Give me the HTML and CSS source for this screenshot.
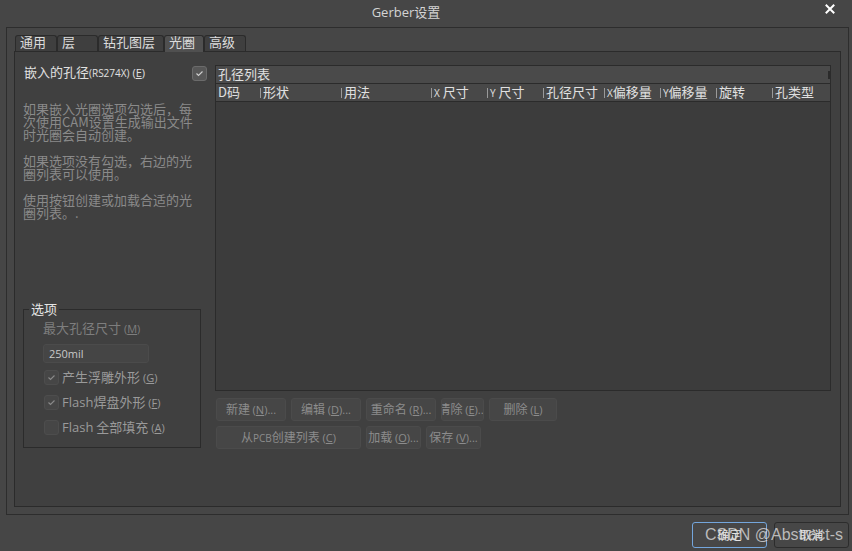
FILE: index.html
```html
<!DOCTYPE html>
<html lang="zh-CN">
<head>
<meta charset="utf-8">
<title>Gerber设置</title>
<link rel="stylesheet" href="styles.css">
</head>
<body>
<div class="window">
  <header class="titlebar">
    <div class="title">Gerber设置</div>
    <div class="close"><svg width="10" height="10" viewBox="0 0 10 10"><path d="M1.5 1.5L8.5 8.5M8.5 1.5L1.5 8.5" stroke="#ffffff" stroke-width="2" stroke-linecap="square"/></svg></div>
  </header>
  <div class="frame">
    <div class="tabs">
      <div class="tab t1">通用</div>
      <div class="tab t2">层</div>
      <div class="tab t3">钻孔图层</div>
      <div class="tab t4 active">光圈</div>
      <div class="tab t5">高级</div>
    </div>
    <div class="page">
      <div class="left">
        <div class="embed-row">
          <span class="embed-label">嵌入的孔径<span class="s10">(RS274X)</span> <span class="s11">(<u>E</u>)</span></span>
          <span class="cb-big"><svg width="13" height="13" viewBox="0 0 13 13"><path d="M3.5 6.5L5.5 8.5L9.5 4.5" fill="none" stroke="#d0d0d0" stroke-width="1.1"/></svg></span>
        </div>
        <div class="desc">
          <p>如果嵌入光圈选项勾选后，每<br>次使用CAM设置生成输出文件<br>时光圈会自动创建。</p>
          <p>如果选项没有勾选，右边的光<br>圈列表可以使用。</p>
          <p>使用按钮创建或加载合适的光<br>圈列表。.</p>
        </div>
        <fieldset class="group">
          <legend>选项</legend>
          <div class="field-label">最大孔径尺寸 <span class="s11">(<u>M</u>)</span></div>
          <div class="input">250mil</div>
          <div class="check-row"><span class="cb"><svg width="13" height="13" viewBox="0 0 13 13"><path d="M3.5 6.5L5.5 8.5L9.5 4.5" fill="none" stroke="#8a8a8a" stroke-width="1.1"/></svg></span><span class="check-label">产生浮雕外形 <span class="s11">(<u>G</u>)</span></span></div>
          <div class="check-row"><span class="cb"><svg width="13" height="13" viewBox="0 0 13 13"><path d="M3.5 6.5L5.5 8.5L9.5 4.5" fill="none" stroke="#8a8a8a" stroke-width="1.1"/></svg></span><span class="check-label"><span class="lat">Flash</span>焊盘外形 <span class="s11">(<u>F</u>)</span></span></div>
          <div class="check-row"><span class="cb"></span><span class="check-label"><span class="lat">Flash</span> 全部填充 <span class="s11">(<u>A</u>)</span></span></div>
        </fieldset>
      </div>
      <div class="right">
        <div class="list">
          <div class="list-title">孔径列表</div>
          <div class="cols">
            <div class="col first">D码</div>
            <div class="col">形状</div>
            <div class="col">用法</div>
            <div class="col"><span class="xy">X</span> 尺寸</div>
            <div class="col"><span class="xy">Y</span> 尺寸</div>
            <div class="col">孔径尺寸</div>
            <div class="col"><span class="xy">X</span>偏移量</div>
            <div class="col"><span class="xy">Y</span>偏移量</div>
            <div class="col">旋转</div>
            <div class="col">孔类型</div>
          </div>
          <div class="list-body"></div>
        </div>
        <div class="btns">
          <div class="btn-row">
            <div class="btn w70"><span>新建 <span class="s11">(<u>N</u>)...</span></span></div>
            <div class="btn w70"><span>编辑 <span class="s11">(<u>D</u>)...</span></span></div>
            <div class="btn w70"><span>重命名 <span class="s11">(<u>R</u>)...</span></span></div>
            <div class="btn w43"><span>清除 <span class="s11">(<u>E</u>)...</span></span></div>
            <div class="btn w68"><span>删除 <span class="s11">(<u>L</u>)</span></span></div>
          </div>
          <div class="btn-row">
            <div class="btn w145"><span>从<span class="s10">PCB</span>创建列表 <span class="s11">(<u>C</u>)</span></span></div>
            <div class="btn w55"><span>加载 <span class="s11">(<u>O</u>)...</span></span></div>
            <div class="btn w55"><span>保存 <span class="s11">(<u>V</u>)...</span></span></div>
          </div>
        </div>
      </div>
    </div>
  </div>
  <div class="footer">
    <div class="fbtn ok">确定</div>
    <div class="fbtn">取消</div>
  </div>
  <div class="watermark">CSDN @Abstract-s</div>
</div>
</body>
</html>
```
FILE: styles.css
```css
* { box-sizing: border-box; }
html, body { margin: 0; padding: 0; }
body {
  width: 852px;
  height: 551px;
  overflow: hidden;
  background: #464646;
  font-family: "Noto Sans CJK SC", "Open Sans", sans-serif;
  font-size: 13px;
  color: #dedede;
}
.window { position: relative; width: 852px; height: 551px; }
.lat, .s10, .s11, .xy, .input { font-family: "Open Sans", "Noto Sans CJK SC", sans-serif; }
.s10 { font-size: 10px; }
.s11 { font-size: 11px; }
u { text-underline-offset: 1px; }

.titlebar { height: 27px; display: flex; align-items: flex-start; }
.title { flex: 1; margin-top: 4px; text-align: center; color: #d4d4d4; font-size: 13px; line-height: 16px; font-family: "Open Sans", "Noto Sans CJK SC", sans-serif; }
.close { width: 40px; padding-right: 4px; margin-top: 4px; display: flex; justify-content: center; }
.close svg { display: block; }

.frame {
  margin-left: 6px;
  width: 843px;
  height: 488px;
  border: 1px solid #2d2d2d;
  padding: 7px;
}
.tabs { display: flex; height: 16px; padding-left: 1px; }
.tab {
  height: 16px;
  border: 1px solid #2b2b2b;
  border-bottom: none;
  border-radius: 3px 3px 0 0;
  background: #3f3f3f;
  color: #dcdcdc;
  font-size: 13px;
  line-height: 12px;
  padding-left: 4px;
  white-space: nowrap;
}
.tab.active { background: #505050; height: 17px; position: relative; z-index: 1; }
.t1 { width: 42px; } .t2 { width: 41px; } .t3 { width: 66px; } .t4 { width: 40px; } .t5 { width: 42px; }

.page {
  height: 456px;
  border: 1px solid #2b2b2b;
  background: #404040;
  padding: 13px 9px 0 8px;
  display: grid;
  grid-template-columns: 184px 616px;
  column-gap: 8px;
  align-items: start;
}

.embed-row { display: flex; justify-content: space-between; align-items: center; height: 16px; }
.embed-label { padding-left: 1px; line-height: 14px; padding-bottom: 1px; color: #e0e0e0; white-space: nowrap; }
.cb-big {
  width: 15px; height: 15px;
  border: 1px solid #6b6b6b;
  border-radius: 3px;
  background: #575757;
  display: flex;
}
.desc { margin-top: 21px; color: #8a8a8a; font-size: 13px; line-height: 13px; white-space: nowrap; }
.desc p { margin: 0 0 13px; }
.desc p:last-child { margin-bottom: 0; }

.group {
  margin: 82px 0 0;
  width: 178px;
  min-inline-size: 0;
  border: 1px solid #2b2b2b;
  padding: 4px 8px 12px 19px;
}
.group legend {
  margin-left: -14px;
  padding: 0 2px;
  line-height: 16px;
  font-size: 13px;
  color: #e6e6e6;
}
.field-label { line-height: 14px; padding-bottom: 2px; color: #7e7e7e; white-space: nowrap; }
.input {
  margin-top: 6px;
  width: 106px;
  height: 19px;
  border: 1px solid #4b4b4b;
  border-radius: 3px;
  background: #454545;
  color: #c8c8c8;
  font-size: 11px;
  line-height: 17px;
  padding-left: 5px;
}
.check-row { display: flex; align-items: center; gap: 3px; height: 15px; margin-top: 10px; padding-left: 1px; }
.input + .check-row { margin-top: 7px; }
.cb {
  width: 15px; height: 15px;
  border: 1px solid #4d4d4d;
  border-radius: 3px;
  background: #464646;
  display: flex;
  flex: none;
}
.check-label { color: #9a9a9a; line-height: 13px; padding-bottom: 2px; white-space: nowrap; }

.list {
  height: 326px;
  border: 1px solid #2b2b2b;
  background: #3c3c3c;
  display: flex;
  flex-direction: column;
}
.list-title {
  height: 18px;
  border-bottom: 1px solid #2b2b2b;
  background: #4a4a4a linear-gradient(#2b2b2b, #2b2b2b) right center / 2px 8px no-repeat;
  padding-left: 2px;
  line-height: 15px;
  color: #e0e0e0;
}
.cols {
  height: 18px;
  border-bottom: 1px solid #2b2b2b;
  background: #484848;
  display: grid;
  grid-template-columns: 44px 81px 90px 56px 56px 61px 56px 56px 56px 1fr;
}
.col {
  padding-left: 3px;
  line-height: 15px;
  white-space: nowrap;
  color: #e0e0e0;
  background: linear-gradient(#9a9a9a, #9a9a9a) left 4px / 1px 10px no-repeat;
}
.col.first { padding-left: 2px; background: none; }
.xy { font-size: 10px; }
.list-body { flex: 1; }

.btns { margin-top: 7px; margin-left: 1px; display: flex; flex-direction: column; gap: 5px; }
.btn-row { display: flex; gap: 5px; }
.btn {
  height: 23px;
  border: 1px solid #4b4b4b;
  border-radius: 3px;
  background: #464646;
  color: #8c8c8c;
  font-size: 12px;
  line-height: 19px;
  white-space: nowrap;
  overflow: hidden;
  display: flex;
  justify-content: center;
}
.btn > span { flex: none; }
.w70 { width: 70px; } .w43 { width: 43px; } .w68 { width: 68px; } .w145 { width: 145px; } .w55 { width: 55px; }

.footer { display: flex; justify-content: flex-end; gap: 7px; padding-right: 3px; margin-top: 7px; }
.fbtn {
  width: 75px;
  height: 26px;
  border: 1px solid #2c2c2c;
  border-radius: 3px;
  background: #474747;
  color: #e4e4e4;
  font-size: 12px;
  line-height: 23px;
  text-align: center;
}
.fbtn.ok { border-color: #74a6dc; }

.watermark {
  position: absolute;
  left: 705px;
  top: 526px;
  font-family: "Liberation Sans", Arial, sans-serif;
  font-size: 16px;
  line-height: 18px;
  color: rgba(220, 220, 220, 0.78);
  white-space: nowrap;
  pointer-events: none;
}
```
